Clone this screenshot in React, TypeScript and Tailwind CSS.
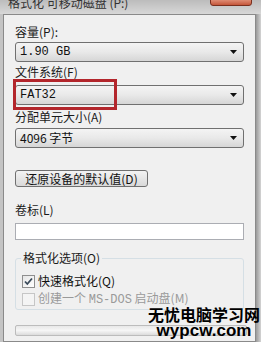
// App.tsx — 格式化对话框（局部截图）
const FONT = '"Noto Sans CJK SC", "DejaVu Sans", sans-serif'
const MONO = '"Liberation Mono", "Noto Sans CJK SC", monospace'

function Combo({ text, mono = false }: { text: string; mono?: boolean }) {
  return (
    <div className="flex h-[20px] w-[229px] items-center justify-between rounded-[3px] border border-[#707070] bg-gradient-to-b from-[#f4f4f4] via-[#e9e9e9] to-[#d6d6d6] pl-[4px] pr-[6px]">
      <span
        className="text-[12px] leading-none text-[#111]"
        style={{ fontFamily: mono ? MONO : FONT }}
      >
        {text}
      </span>
      <svg width="7" height="4" viewBox="0 0 7 4">
        <path d="M0 0h7L3.5 4z" fill="#111" />
      </svg>
    </div>
  )
}

function Label({ children, className = '' }: { children: React.ReactNode; className?: string }) {
  return <div className={`h-[14px] text-[12px] leading-[14px] text-[#1a1a1a] ${className}`}>{children}</div>
}

export default function App() {
  return (
    <div
      className="relative flex h-[342px] w-[261px] flex-col overflow-hidden bg-[#cfcfcf]"
      style={{ fontFamily: FONT }}
    >
      {/* title bar */}
      <div className="relative h-[14px] shrink-0 bg-gradient-to-b from-[#bcbcbc] to-[#d8d8d8]">
        <div className="absolute -top-[6px] left-[8px] text-[12px] text-[#333]">格式化 可移动磁盘 (P:)</div>
        <div className="absolute left-[210px] -top-[3px] h-[9px] w-[42px] rounded-b-[3px] border border-[#7a2f1e] bg-gradient-to-b from-[#e8a08a] to-[#c4563a]" />
      </div>

      <div className="flex flex-1">
        <div className="w-[3px] bg-[#c4c4c4]" />
        <div className="flex flex-1 flex-col border border-[#8a8a8a] bg-[#f0f0f0] pl-[11px]">
          <Label className="mt-[10px]">容量(P):</Label>
          <div className="mt-[3px]">
            <Combo text="1.90 GB" mono />
          </div>
          <Label className="mt-[3px]">文件系统(F)</Label>
          <div className="mt-[6px]">
            <Combo text="FAT32" mono />
          </div>
          <Label className="mt-[5px]">分配单元大小(A)</Label>
          <div className="mt-[4px]">
            <Combo text="4096 字节" />
          </div>
          <div className="mt-[22px] flex h-[17px] w-[133px] items-center justify-center rounded-[3px] border border-[#707070] bg-gradient-to-b from-[#f3f3f3] to-[#d9d9d9] text-[12px] leading-none text-[#111]">
            还原设备的默认值(D)
          </div>
          <Label className="mt-[16px]">卷标(L)</Label>
          <div className="mt-[6px] h-[17px] w-[229px] border border-[#abadb3] bg-white" />

          <div className="relative mt-[18px] h-[52px] w-[229px] rounded-[3px] border border-[#d5dfe5]">
            <div className="absolute -top-[8px] left-[5px] bg-[#f0f0f0] px-[2px] text-[12px] leading-[14px] text-[#1a1a1a]">
              格式化选项(O)
            </div>
            <div className="mt-[15px] flex items-center pl-[6px]">
              <div className="flex h-[13px] w-[13px] items-center justify-center border border-[#8f8f8f] bg-gradient-to-br from-[#e6e6e6] to-white">
                <svg width="9" height="9" viewBox="0 0 9 9">
                  <path d="M1 4.5l2.3 2.5L8 1.5" stroke="#3a4a5a" strokeWidth="1.8" fill="none" />
                </svg>
              </div>
              <span className="ml-[3px] text-[12px] leading-[14px] text-[#111]">快速格式化(Q)</span>
            </div>
            <div className="mt-[3px] flex items-center pl-[6px]">
              <div className="h-[13px] w-[13px] border border-[#c6c6c6] bg-[#f4f4f4]" />
              <span className="ml-[3px] text-[12px] leading-[14px] text-[#9a9a9a]">
                创建一个 <span style={{ fontFamily: MONO }}>MS-DOS</span> 启动盘(M)
              </span>
            </div>
          </div>

          <div className="mt-[15px] h-[11px] w-[232px] rounded-[2px] border border-[#bcbcbc] bg-gradient-to-b from-[#e8e8e8] via-[#f6f6f6] to-[#dcdcdc]" />
        </div>
        <div className="w-[5px] bg-gradient-to-r from-[#9a9a9a] to-[#d4d4d4]" />
      </div>

      {/* highlight */}
      <div className="absolute left-[13px] top-[79px] h-[31px] w-[104px] border-[3px] border-[#b3262c]" />

      {/* watermark */}
      <div className="absolute left-[148px] top-[306px] flex flex-col items-center">
        <div className="text-[16px] font-bold leading-[17px] text-black">无忧电脑学习网</div>
        <div
          className="text-[17px] font-bold leading-[16px] text-black"
          style={{ fontFamily: '"Liberation Sans", Arial, sans-serif' }}
        >
          wypcw.com
        </div>
      </div>
    </div>
  )
}
